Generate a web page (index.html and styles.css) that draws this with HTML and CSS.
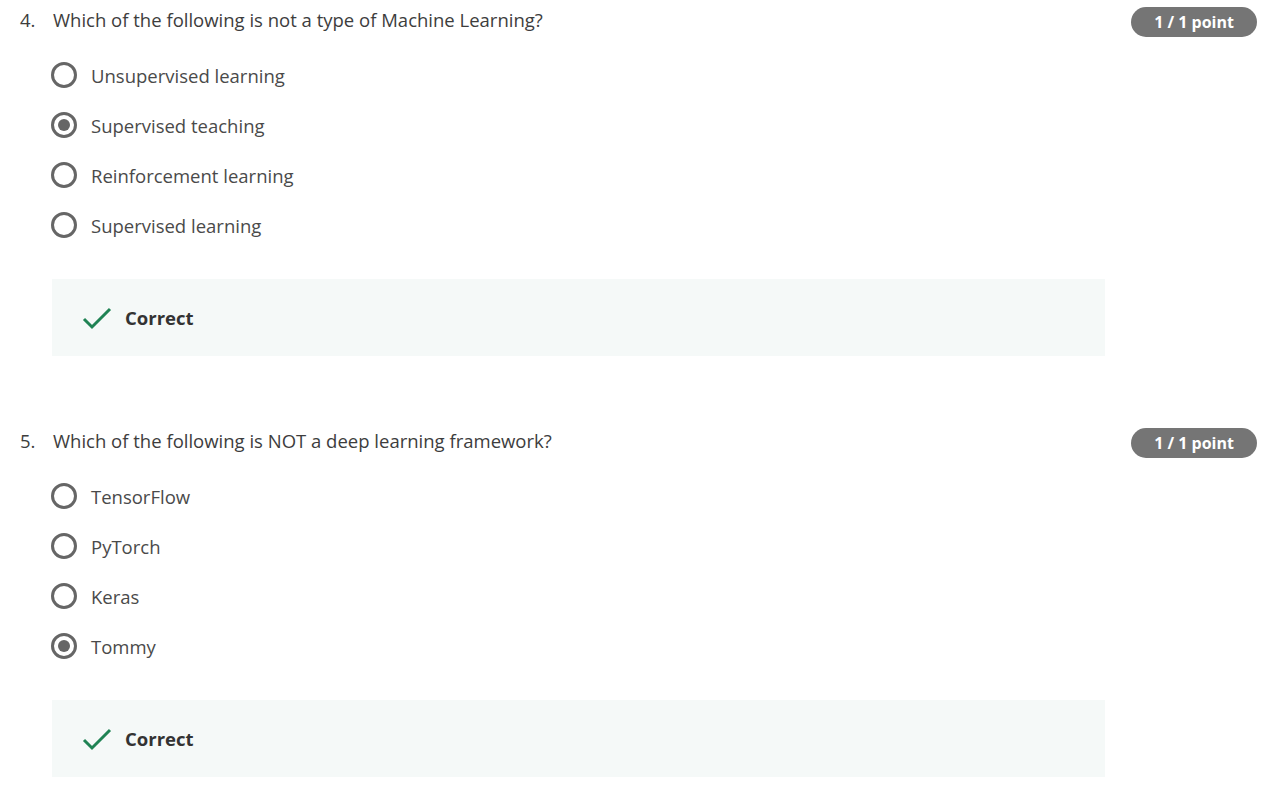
FILE: index.html
```html
<!DOCTYPE html>
<html>
<head>
<meta charset="utf-8">
<link rel="stylesheet" href="styles.css">
</head>
<body>
<div class="quiz">
  <section class="question">
    <div class="q-head">
      <span class="q-num">4.</span>
      <span class="q-text">Which of the following is not a type of Machine Learning?</span>
      <span class="badge">1 / 1 point</span>
    </div>
    <ul class="options">
      <li class="option"><span class="radio"></span><span>Unsupervised learning</span></li>
      <li class="option"><span class="radio checked"></span><span>Supervised teaching</span></li>
      <li class="option"><span class="radio"></span><span>Reinforcement learning</span></li>
      <li class="option"><span class="radio"></span><span>Supervised learning</span></li>
    </ul>
    <div class="feedback">
      <svg class="check" width="30" height="24" viewBox="0 0 30 24"><path d="M2 13 L10 21 L28 3" fill="none" stroke="#1f8354" stroke-width="3"/></svg>
      <span class="fb-text">Correct</span>
    </div>
  </section>
  <section class="question">
    <div class="q-head">
      <span class="q-num">5.</span>
      <span class="q-text">Which of the following is NOT a deep learning framework?</span>
      <span class="badge">1 / 1 point</span>
    </div>
    <ul class="options">
      <li class="option"><span class="radio"></span><span>TensorFlow</span></li>
      <li class="option"><span class="radio"></span><span>PyTorch</span></li>
      <li class="option"><span class="radio"></span><span>Keras</span></li>
      <li class="option"><span class="radio checked"></span><span>Tommy</span></li>
    </ul>
    <div class="feedback">
      <svg class="check" width="30" height="24" viewBox="0 0 30 24"><path d="M2 13 L10 21 L28 3" fill="none" stroke="#1f8354" stroke-width="3"/></svg>
      <span class="fb-text">Correct</span>
    </div>
  </section>
</div>
</body>
</html>
```
FILE: styles.css
```css
html, body {
  margin: 0;
  padding: 0;
  background: #fff;
}
body {
  font-family: "Open Sans", "Liberation Sans", sans-serif;
  color: #3d3d3d;
}
.quiz {
  display: flex;
  flex-direction: column;
  gap: 65px;
  padding: 0 16px 0 20px;
}
.question {
  display: flex;
  flex-direction: column;
}
.q-head {
  display: flex;
  align-items: flex-start;
  height: 40px;
}
.q-num {
  width: 33px;
  font-size: 18.5px;
  line-height: 40px;
}
.q-text {
  flex: 1;
  font-size: 18.5px;
  line-height: 40px;
}
.badge {
  margin-top: 7px;
  width: 126px;
  height: 30px;
  border-radius: 15px;
  background: #757575;
  color: #fff;
  font-weight: 700;
  font-size: 16px;
  line-height: 30px;
  text-align: center;
}
.options {
  list-style: none;
  margin: 10px 0 0 0;
  padding: 0 0 0 31px;
  display: flex;
  flex-direction: column;
}
.option {
  height: 50px;
  display: flex;
  align-items: center;
  gap: 14px;
  font-size: 18.5px;
  color: #4a4a4a;
}
.radio {
  box-sizing: border-box;
  width: 26px;
  height: 26px;
  border: 3px solid #666;
  border-radius: 50%;
  display: flex;
  align-items: center;
  justify-content: center;
}
.radio.checked::after {
  content: "";
  width: 12px;
  height: 12px;
  border-radius: 50%;
  background: #666;
}
.feedback {
  margin: 29px 0 0 32px;
  width: 1053px;
  height: 77px;
  background: #f5f9f8;
  display: flex;
  align-items: center;
  padding-left: 30px;
  box-sizing: border-box;
  gap: 13px;
}
.check {
  display: block;
}
.fb-text {
  font-weight: 700;
  font-size: 18.5px;
  color: #333;
}
```
